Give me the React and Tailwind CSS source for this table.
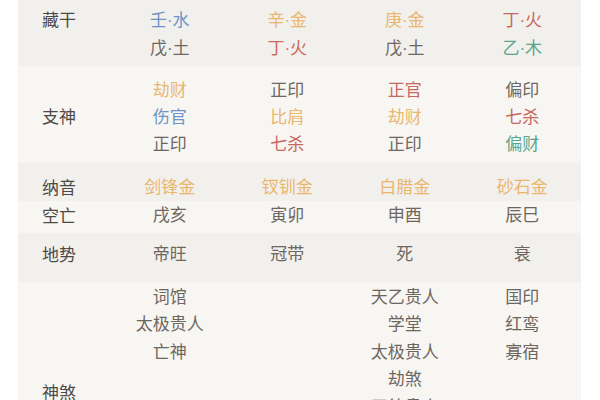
import React from 'react';

const C = {
  blue: 'text-[#6f93c4]',
  gold: 'text-[#e9b76e]',
  gray: 'text-[#6e675f]',
  red: 'text-[#c8695f]',
  green: 'text-[#5ba68b]',
};

// each cell: list of [text, colour]
const rows = [
  {
    label: '藏干',
    bg: 'bg-[#f2f0ed]',
    pad: 'pt-[5px] pb-[5px]',
    lead: 'leading-[28px]',
    top: true,
    cells: [
      [['壬·水', C.blue], ['戊·土', C.gray]],
      [['辛·金', C.gold], ['丁·火', C.red]],
      [['庚·金', C.gold], ['戊·土', C.gray]],
      [['丁·火', C.red], ['乙·木', C.green]],
    ],
  },
  {
    label: '支神',
    bg: 'bg-[#f7f6f3]',
    pad: 'pt-[9px] pb-[7px]',
    lead: 'leading-[27px]',
    cells: [
      [['劫财', C.gold], ['伤官', C.blue], ['正印', C.gray]],
      [['正印', C.gray], ['比肩', C.gold], ['七杀', C.red]],
      [['正官', C.red], ['劫财', C.gold], ['正印', C.gray]],
      [['偏印', C.gray], ['七杀', C.red], ['偏财', C.green]],
    ],
  },
  {
    label: '纳音',
    bg: 'bg-[#f2f0ed]',
    pad: 'pt-[11px] pb-[1px]',
    lead: 'leading-[24px]',
    cells: [
      [['剑锋金', C.gold]],
      [['钗钏金', C.gold]],
      [['白腊金', C.gold]],
      [['砂石金', C.gold]],
    ],
  },
  {
    label: '空亡',
    bg: 'bg-[#f7f6f3]',
    pad: 'pt-[1px] pb-[6px]',
    lead: 'leading-[24px]',
    cells: [
      [['戌亥', C.gray]],
      [['寅卯', C.gray]],
      [['申酉', C.gray]],
      [['辰巳', C.gray]],
    ],
  },
  {
    label: '地势',
    bg: 'bg-[#f2f0ed]',
    pad: 'pt-[8px] pb-[15px]',
    lead: 'leading-[24px]',
    cells: [
      [['帝旺', C.gray]],
      [['冠带', C.gray]],
      [['死', C.gray]],
      [['衰', C.gray]],
    ],
  },
  {
    label: '神煞',
    bg: 'bg-[#f7f6f3]',
    pad: 'pt-0 pb-[10px]',
    lead: 'leading-[27.5px]',
    cells: [
      [['词馆', C.gray], ['太极贵人', C.gray], ['亡神', C.gray]],
      [],
      [['天乙贵人', C.gray], ['学堂', C.gray], ['太极贵人', C.gray], ['劫煞', C.gray], ['天德贵人', C.gray], ['月德贵人', C.gray], ['将星', C.gray], ['华盖', C.gray]],
      [['国印', C.gray], ['红鸾', C.gray], ['寡宿', C.gray]],
    ],
  },
];

// the CJK font draws a full-width dot, the reference has a narrow one
function Text({ t }) {
  if (!t.includes('·')) return t;
  const [a, b] = t.split('·');
  return (
    <>
      {a}
      <span className="leading-none" style={{ fontFamily: '"Liberation Sans", sans-serif' }}>
        ·
      </span>
      {b}
    </>
  );
}

function Row({ row }) {
  return (
    <div className={`grid grid-cols-[93px_repeat(4,1fr)] ${row.bg} ${row.pad}`}>
      <div
        className={`flex pl-6 text-[#4d4a46] ${row.top ? `items-start ${row.lead}` : 'items-center'}`}
      >
        {row.label}
      </div>
      {row.cells.map((cell, i) => (
        <div key={i} className={`flex flex-col items-center ${row.lead}`}>
          {cell.map(([t, c], j) => (
            <span key={j} className={`h-[inherit] ${c}`}>
              <Text t={t} />
            </span>
          ))}
        </div>
      ))}
    </div>
  );
}

export default function App() {
  return (
    <div
      className="w-[600px] h-[400px] overflow-hidden bg-white px-[18px] text-[17px]"
      style={{ fontFamily: '"Noto Sans CJK SC", "Noto Sans", sans-serif' }}
    >
      <div className="w-[563px]">
        {rows.map((row) => (
          <Row key={row.label} row={row} />
        ))}
      </div>
    </div>
  );
}
